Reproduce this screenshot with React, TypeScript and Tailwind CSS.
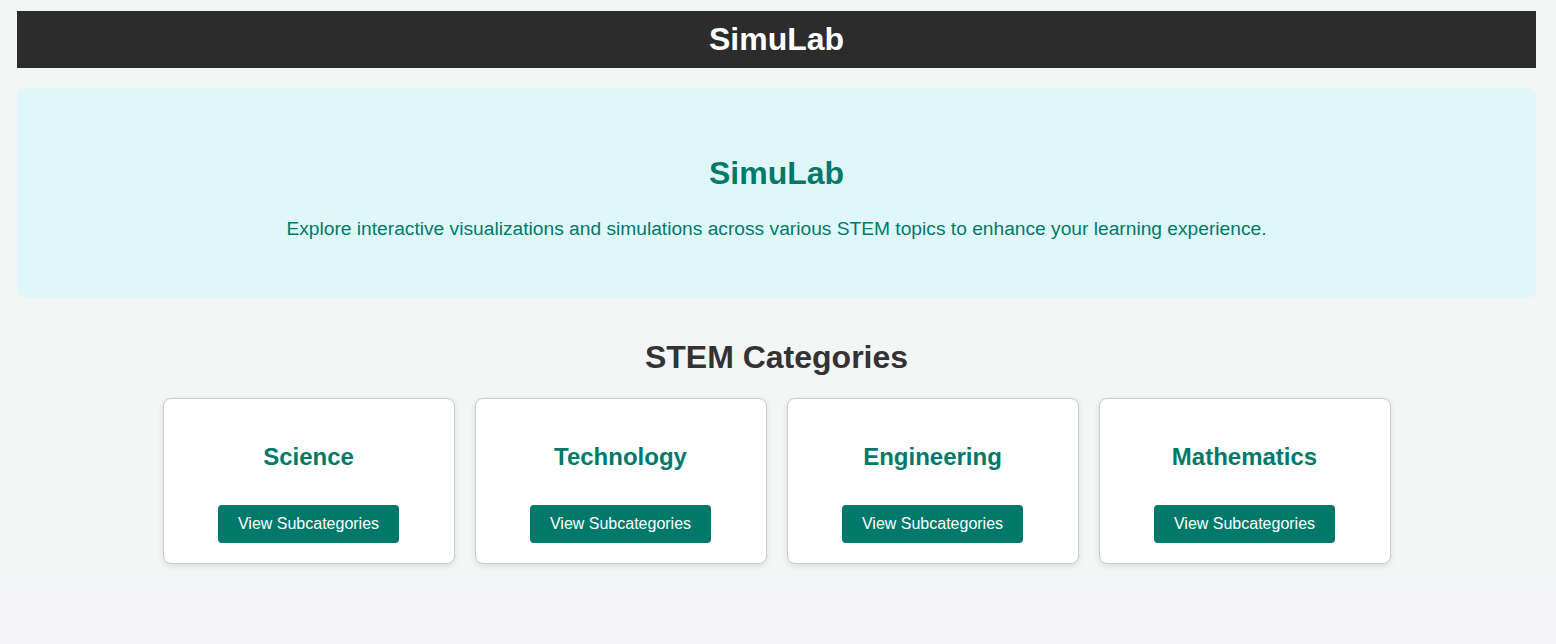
import React from "react";

const categories = ["Science", "Technology", "Engineering", "Mathematics"];

export default function App() {
  return (
    <div
      className="min-h-[644px] bg-[#f4f4f9]"
      style={{ fontFamily: '"Liberation Sans", Arial, sans-serif' }}
    >
      <div className="bg-[#f4f5f5] pt-[11px] pb-[20px] pl-[17px] pr-[20px]">
        <header className="bg-[#2c2c2c] h-[57px] flex items-center justify-center">
          <h1 className="text-white text-[32px] font-bold leading-[37px]">SimuLab</h1>
        </header>

        <section className="mt-[20px] bg-[#e0f7fa] rounded-[8px] h-[210px] pt-[67px] flex flex-col items-center">
          <h2 className="text-[#00796b] text-[32px] font-bold leading-[37px]">SimuLab</h2>
          <p className="mt-[26px] text-[#00796b] text-[19.2px] leading-[22px]">
            Explore interactive visualizations and simulations across various STEM topics to enhance your learning experience.
          </p>
        </section>

        <h2 className="mt-[41px] text-center text-[#333333] text-[32px] font-bold leading-[37px]">
          STEM Categories
        </h2>

        <div className="mt-[22px] flex justify-center gap-[20px]">
          {categories.map((c) => (
            <div
              key={c}
              className="w-[292px] h-[166px] bg-white border border-[#cccccc] rounded-[8px] shadow-[0_2px_6px_rgba(0,0,0,0.1)] flex flex-col items-center pt-[44px]"
            >
              <h3 className="text-[#00796b] text-[24px] font-bold leading-[28px]">{c}</h3>
              <button className="mt-[34px] h-[38px] px-[20px] bg-[#00796b] text-white text-[16px] leading-[18px] rounded-[4px]">
                View Subcategories
              </button>
            </div>
          ))}
        </div>
      </div>
    </div>
  );
}
